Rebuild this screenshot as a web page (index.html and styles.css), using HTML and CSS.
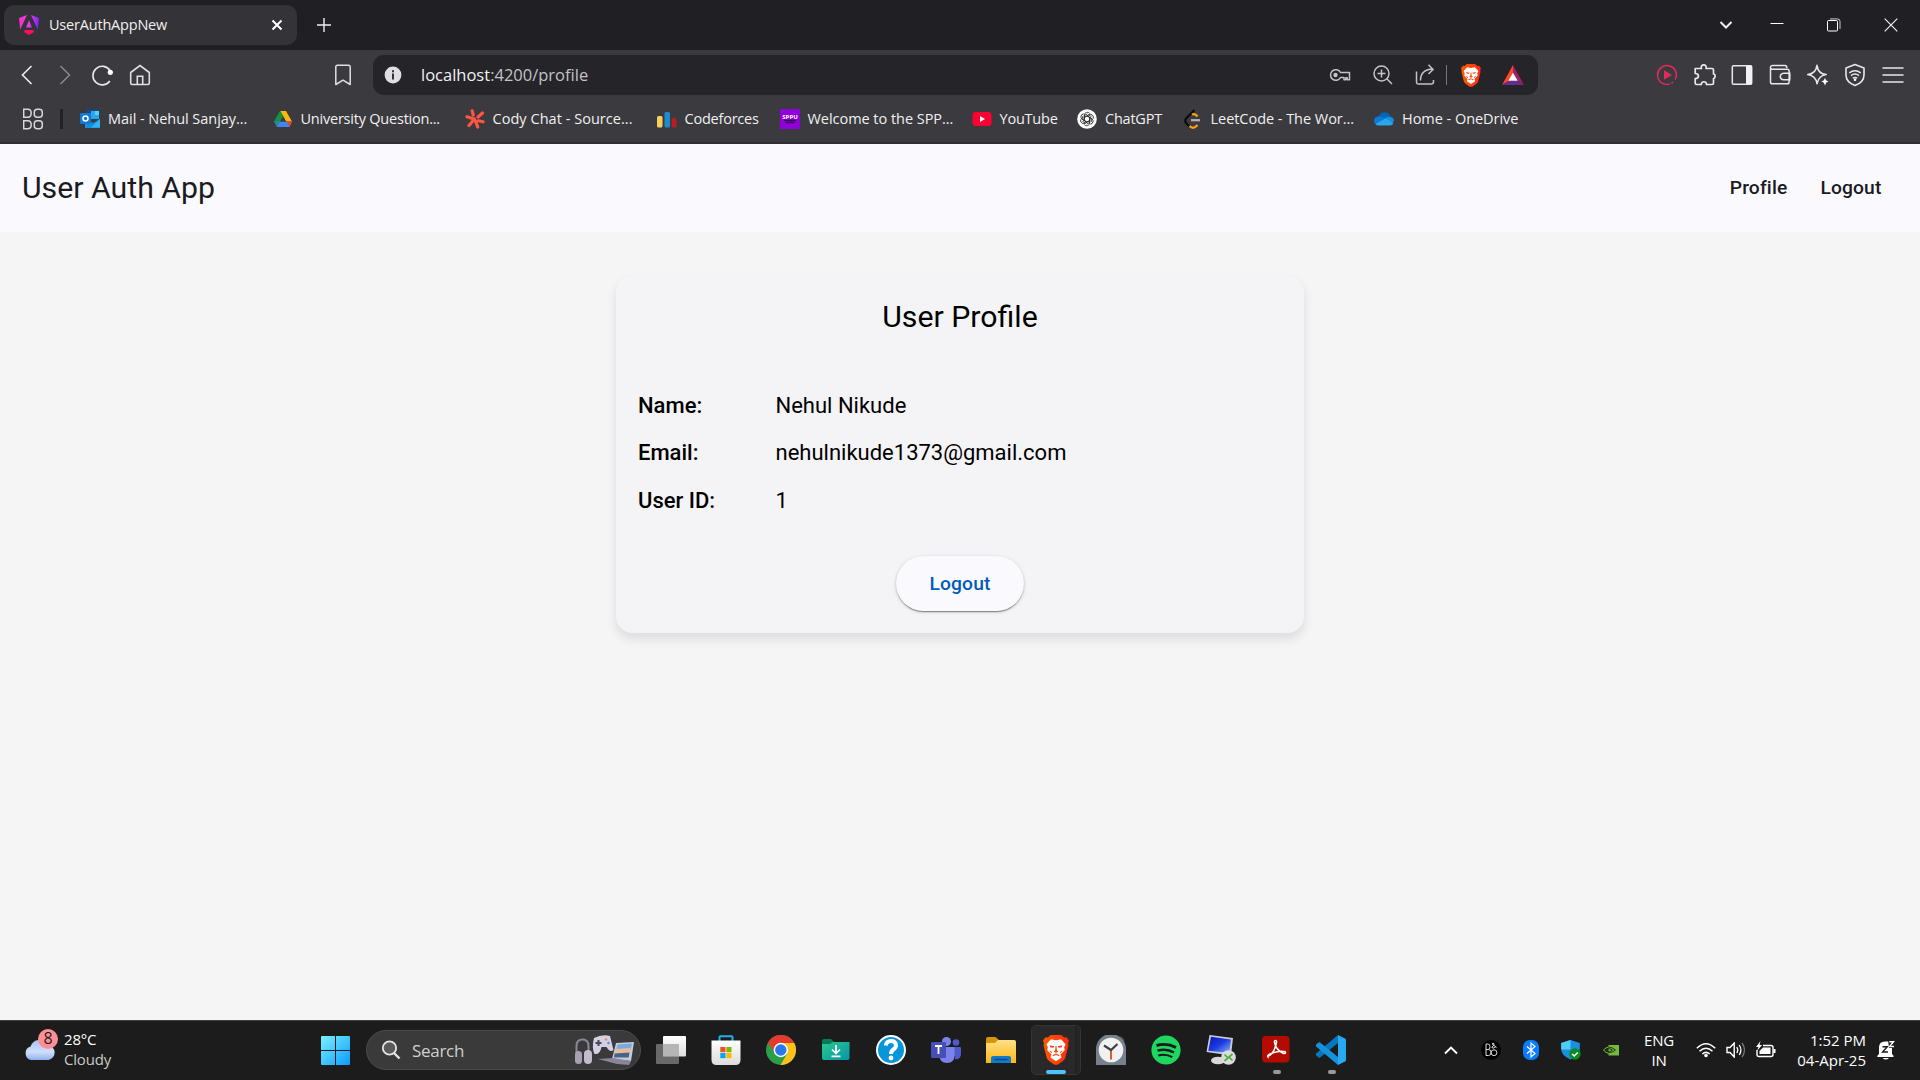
FILE: index.html
```html
<!DOCTYPE html>
<html lang="en">
<head>
<meta charset="utf-8">
<title>UserAuthAppNew</title>
<link rel="stylesheet" href="styles.css">
</head>
<body>
<svg class="defs" width="0" height="0" aria-hidden="true">
  <defs>
    <linearGradient id="braveFill" x1="0" x2="1"><stop offset="0" stop-color="#ff5a00"/><stop offset="1" stop-color="#ff2a10"/></linearGradient>
    <linearGradient id="ngFill" x1="0" x2="1" y1=".5" y2=".6"><stop offset="0" stop-color="#ff2dc4"/><stop offset=".5" stop-color="#e93cf0"/><stop offset="1" stop-color="#7a21ff"/></linearGradient>
    <linearGradient id="winFill" x1="0" y1="0" x2="1" y2="1"><stop offset="0" stop-color="#7df0ff"/><stop offset="1" stop-color="#0a9bff"/></linearGradient>
    <linearGradient id="cloudFill" x1="0" y1="0" x2="0" y2="1"><stop offset="0" stop-color="#a8c3f5"/><stop offset=".6" stop-color="#cfdffa"/><stop offset="1" stop-color="#8fb0ee"/></linearGradient>
    <linearGradient id="folderFill" x1="0" y1="0" x2="0" y2="1"><stop offset="0" stop-color="#ffe08a"/><stop offset="1" stop-color="#fbb80f"/></linearGradient>
    <linearGradient id="greenFill" x1="0" y1="0" x2="1" y2="1"><stop offset="0" stop-color="#2bc98a"/><stop offset="1" stop-color="#0496a8"/></linearGradient>
    <linearGradient id="screenFill" x1="0" y1="0" x2="1" y2="1"><stop offset="0" stop-color="#0818b8"/><stop offset=".5" stop-color="#1c3be0"/><stop offset="1" stop-color="#8db9f4"/></linearGradient>
    <linearGradient id="greyFill" x1="0" y1="0" x2="0" y2="1"><stop offset="0" stop-color="#ffffff"/><stop offset="1" stop-color="#dcdcdc"/></linearGradient>
    <symbol id="brave" viewBox="0 0 26 30">
      <path fill="url(#braveFill)" d="M7.500 0h11l2.600 2.600 2.400-.4L26 5.600l-1 3 .5 1.600-3.400 13.200-2.400 2.800-5.200 3.600h-3L6.300 26.200 3.900 23.400.5 10.200l.5-1.600-1-3 2.500-3.400 2.400.4z"/>
      <path fill="#fff" d="M8 4.200 13 5.200l5-1 4.600 5-1.500 3.200.7 2.500-4.200 4.600.9 3L13 26.200l-5.500-3.700.9-3-4.200-4.600.7-2.500-1.500-3.200z"/>
      <path fill="#ff4510" d="m6.500 10.300 4.800 1-1 1.500-2.800-.4zM19.500 10.300l-4.800 1 1 1.500 2.800-.4zM12.500 11h1l.3 4 1.400 1.500-2.200 1.500-2.200-1.500 1.400-1.500zM9.300 20.300l3.700-1.800 3.700 1.800-1 .8-2.700-1.200-2.700 1.200zM6 15l3 2-.5 1.500zM20 15l-3 2 .5 1.500z"/>
    </symbol>
  </defs>
</svg>

<header class="browser">
  <div class="tabstrip">
    <div class="tab">
      <svg class="fav" viewBox="0 0 20 20" width="20" height="20"><path fill="url(#ngFill)" d="M8 0 0 3l1.200 11.500zM12 0l8 3-1.200 11.500zM10 5.300l3 7.200H7z"/><path fill="#ff0f4d" d="M5.800 15h8.400l1 2-5.200 3-5.200-3z"/></svg>
      <span class="tab-title">UserAuthAppNew</span>
      <svg viewBox="0 0 12 12" width="12" height="12"><path d="M1.500 1.500l9 9m0-9-9 9" stroke="#fff" stroke-width="2"/></svg>
    </div>
    <svg class="newtab" viewBox="0 0 14 14" width="14" height="14"><path d="M7 0v14M0 7h14" stroke="#eee" stroke-width="1.400"/></svg>
    <div class="winctl">
      <svg viewBox="0 0 14 14" width="14" height="14"><path d="m1.500 4 5.500 5.500L12.500 4" fill="none" stroke="#eee" stroke-width="2"/></svg>
      <svg viewBox="0 0 14 14" width="14" height="14"><path d="M.5 5.500h13" stroke="#fff"/></svg>
      <svg viewBox="0 0 14 14" width="14" height="14"><path d="M3 .9h7.500a2.500 2.500 0 0 1 2.500 2.500V11" fill="none" stroke="#ccc"/><rect x=".5" y="2.500" width="10" height="10.500" rx="1" fill="none" stroke="#fff"/></svg>
      <svg viewBox="0 0 14 14" width="14" height="14"><path d="m.7.7 12.600 12.600m0-12.600L.7 13.300" stroke="#eee" stroke-width="1.200"/></svg>
    </div>
  </div>

  <div class="navbar">
    <div class="navbtns">
      <svg viewBox="0 0 22 22" width="22" height="22"><path d="M15.500 2 6.500 11l9 9" fill="none" stroke="#e8e8ea" stroke-width="1.700"/></svg>
      <svg viewBox="0 0 22 22" width="22" height="22"><path d="M6.500 2l9 9-9 9" fill="none" stroke="#8a898e" stroke-width="1.500"/></svg>
      <svg class="reload" viewBox="0 0 22 22" width="22" height="22"><path d="M18.800 17A9.300 9.300 0 1 1 19 6.500" fill="none" stroke="#e8e8ea" stroke-width="1.600"/><circle cx="19.300" cy="8.300" r="2.600" fill="#fff"/></svg>
      <svg viewBox="0 0 22 22" width="22" height="22"><path d="M1.700 8.500 11 1.500l9.300 7V19q0 1.500-1.500 1.500H3.200Q1.700 20.500 1.700 19zM8.300 20.500v-8.300h5.400v8.300" fill="none" stroke="#e0e0e3" stroke-width="1.600"/></svg>
    </div>
    <svg class="mark" viewBox="0 0 18 22" width="18" height="22"><path d="M1.800 20.500V3q0-1.700 1.700-1.700h11q1.700 0 1.700 1.700v17.500L9 16.200z" fill="none" stroke="#e0e0e3" stroke-width="1.500" stroke-linejoin="round"/></svg>
    <div class="urlbar">
      <svg class="info" viewBox="0 0 18 18" width="18" height="18"><circle cx="9" cy="9" r="8.400" fill="#dfdfe2"/><path d="M8 4.200h2v2H8zM8 7.500h2v6H8z" fill="#333238"/></svg>
      <span class="url">localhost<span class="urlpath">:4200/profile</span></span>
      <div class="urlicons">
        <svg class="key" viewBox="0 0 22 16" width="22" height="16"><path d="M11.500 5.500A5.300 5.300 0 1 0 11.500 10.500H15v2.300h1.800v-2h1.400v2H20.500V5.500z" fill="none" stroke="#c4c4c8" stroke-width="1.500" stroke-linejoin="round"/><circle cx="6.500" cy="8" r="2.200" fill="#c4c4c8"/></svg>
        <svg class="lens" viewBox="0 0 22 22" width="22" height="22"><path d="M14.800 14.800 20 20M9.500 5.500v8M5.500 9.500h8" stroke="#c4c4c8" stroke-width="1.500"/><circle cx="9.500" cy="9.500" r="7.500" fill="none" stroke="#c4c4c8" stroke-width="1.500"/></svg>
        <svg class="share" viewBox="0 0 22 22" width="22" height="22"><path d="M2.500 7.500v10.800q0 1.700 1.700 1.700h13q2.300 0 2.300-2.300V16M6.500 16.500c0-7 3-11 12-11.500M14.500.8l4.500 4.600-4.500 4.600" fill="none" stroke="#c4c4c8" stroke-width="1.500"/></svg>
        <i class="urlsep"></i>
        <svg class="lion" width="20" height="23"><use href="#brave"/></svg>
        <svg class="bat" viewBox="0 0 22 20" width="22" height="20"><path fill="#ff4724" d="M11 0 0 20l7-4.200L11 9z"/><path fill="#9e1f63" d="m11 0 11 20-7-4.200L11 9z"/><path fill="#662d91" d="M0 20h22l-7-4.200H7z"/><path fill="#fff" d="m11 7.800 4.700 8H6.300z"/></svg>
      </div>
    </div>
    <div class="tools">
      <svg viewBox="0 0 22 22" width="22" height="22"><path d="M19.200 15.500A9.400 9.400 0 1 0 14 19.900M15.300 19.300l1.800-1.200" fill="none" stroke="#e6285c" stroke-width="1.500"/><path d="m8 6.200 8 4.800-8 4.800z" fill="#e6285c"/></svg>
      <svg viewBox="0 0 22 22" width="22" height="22"><path d="M1.200 4.500H7.500C6.500 2.500 8 .9 9.700.9s3.200 1.600 2.300 3.600h6q1.500 0 1.500 1.500v4c2-.3 2.200 4.300 0 4.500V19q0 1.500-1.500 1.500H12.500C12.500 16.800 7.300 16.800 7.300 20.500H2.700q-1.500 0-1.500-1.500V14.500C5.500 14.500 5.500 9.500 1.200 9.500z" fill="none" stroke="#e8e8ea" stroke-width="1.700" stroke-linejoin="round"/></svg>
      <svg viewBox="0 0 22 22" width="22" height="22"><rect x="1.300" y="1.800" width="19.400" height="18.400" rx="1.300" fill="none" stroke="#e8e8ea" stroke-width="1.500"/><path d="M15 1.800h6v18.400h-6z" fill="#f2f2f4"/></svg>
      <svg viewBox="0 0 22 22" width="22" height="22"><path d="M1.500 5V18q0 1.800 1.800 1.800h15q1.800 0 1.800-1.800V7q0-1.800-1.800-1.800H2.500Q1 4 1.500 2.800q.5-1.300 2-1.300H16q1.800 0 1.800 2.500M20.800 9.200h-6q-3.500.3-3.500 3.300t3.500 3.300h6z" fill="none" stroke="#e8e8ea" stroke-width="1.500"/></svg>
      <svg viewBox="0 0 22 22" width="22" height="22"><path d="M10 1.300q1 8.500 9.200 9.200-3.500.5-5.700 2.500-2.500 2-3.500 6.700Q9 12 .8 10.500 9 9.500 10 1.300z" fill="none" stroke="#e8e8ea" stroke-width="1.600" stroke-linejoin="round"/><path d="M18 13.500q.5 3.500 3.700 4-3.200.6-3.700 4.300-.6-3.700-3.800-4.300 3.200-.5 3.800-4z" fill="#fff"/></svg>
      <svg viewBox="0 0 22 24" width="22" height="24"><path d="m11 1.600 9 3.300v7q0 7-9 10.700Q2 19 2 12V4.900z" fill="none" stroke="#e8e8ea" stroke-width="1.600" stroke-linejoin="round"/><path d="M5.300 9.800q5.700-4.300 11.400 0M7 12.600q4-3 8 0M8.800 15.200q2.200-1.600 4.400 0" fill="none" stroke="#e8e8ea" stroke-width="1.500"/><circle cx="11" cy="16.700" r="1.300" fill="#fff"/></svg>
      <svg viewBox="0 0 22 22" width="22" height="22"><path d="M.5 4h21M.5 11h21M.5 18h21" stroke="#e8e8ea" stroke-width="1.700"/></svg>
    </div>
  </div>

  <nav class="bookmarks">
    <svg class="apps" viewBox="0 0 20 22" width="20" height="22"><g fill="none" stroke="#d8d8da" stroke-width="1.500"><path d="M.7 1.300h4q3.500 0 3.500 4t-3.500 4h-4zM.7 12.800h4q3.500 0 3.500 4t-3.500 4h-4z"/><rect x="11.300" y="1.300" width="8" height="8" rx="3"/><rect x="11.300" y="12.800" width="8" height="8" rx="3"/></g></svg>
    <i class="bmsep"></i>
    <a class="bm w193 loose"><svg viewBox="0 0 20 20" width="20" height="20"><path fill="#0a4f9c" d="M7 1h12v9H7z"/><path fill="#28a8ea" d="M11 2h8v8h-8z"/><path fill="#50d0ff" d="M15 2h4v4h-4z"/><path fill="#1490df" d="m5 9 8 5 7-4v9H5z"/><path fill="#32b4f0" d="m20 10-9 8.500h9z"/><rect y="4" width="11" height="11" rx="1" fill="#0f78d4"/><circle cx="5.500" cy="9.500" r="2.500" fill="none" stroke="#fff" stroke-width="1.500"/></svg><span>Mail - Nehul Sanjay...</span></a>
    <a class="bm w192"><svg viewBox="0 0 20 20" width="20" height="20"><path fill="#12a150" d="M7 2h6L5 17 1 12.500z"/><path fill="#fcb900" d="M7.500 2h5.500l6 10.500h-6z"/><path fill="#4285f4" d="M1 12.500h18L16.500 18H4z"/><path fill="#ea4335" d="M13.500 12.500H19L16.500 18z"/><path fill="#188038" d="m7.500 2 2.700 4.700L4 18l-3-5.500z" opacity=".45"/><path fill="#3c3b3f" d="m10 7.500 3 5H7z"/></svg><span>University Question...</span></a>
    <a class="bm w192 looser"><svg viewBox="0 0 20 20" width="20" height="20"><path d="m7.200 1.800 1 4.200M17.500 4 13 8M2 7.800l7 2.200M13.500 11.800l4.500 1M9.500 10 4 16.500M10.500 12l2.200 6" stroke="#ff5543" stroke-width="3.200" stroke-linecap="round"/></svg><span>Cody Chat - Source...</span></a>
    <a class="bm w123"><svg viewBox="0 0 20 20" width="20" height="20"><rect x="0" y="7" width="5.500" height="11.500" rx="1.500" fill="#f8cf5c"/><rect x="7.500" y="3" width="5.500" height="15.500" rx="1.500" fill="#1c8ccc"/><rect x="14.700" y="9" width="4.800" height="9.500" rx="1.500" fill="#b51e26"/></svg><span>Codeforces</span></a>
    <a class="bm w192 loose"><svg viewBox="0 0 20 20" width="20" height="20"><path fill="#9000d8" d="M0 0h20v20H0z"/><text x="10" y="9.500" text-anchor="middle" class="sppu">SPPU</text><path d="M4 11.500h12M5.500 13.500h9" stroke="#3b0560" stroke-width="1.500"/></svg><span>Welcome to the SPP...</span></a>
    <a class="bm w106"><svg viewBox="0 0 20 20" width="20" height="20"><rect x=".5" y="3" width="19" height="14" rx="3" fill="#ff0033"/><path fill="#fff" d="m8 7 5 3-5 3z"/></svg><span>YouTube</span></a>
    <a class="bm w106"><svg viewBox="0 0 20 20" width="20" height="20"><circle cx="10" cy="10" r="9.800" fill="#fff"/><g fill="none" stroke="#222" stroke-width=".8"><path id="petal" d="M7.300 11.500V6.200a3 3 0 0 1 5.500-1.600M7.300 8.400l4.300-2.400 3 1.700"/><use href="#petal" transform="rotate(60 10 10)"/><use href="#petal" transform="rotate(120 10 10)"/><use href="#petal" transform="rotate(180 10 10)"/><use href="#petal" transform="rotate(240 10 10)"/><use href="#petal" transform="rotate(300 10 10)"/></g></svg><span>ChatGPT</span></a>
    <a class="bm w191 loose"><svg viewBox="0 0 20 20" width="20" height="20"><path d="m11.500 1-8 8q-2.500 3 0 5.500l3 3" fill="none" stroke="#0c0c0c" stroke-width="2.200"/><path d="M6.500 17q3.500 3.500 7 0l1-1M9 5.500q3-1.500 5.500 2" fill="none" stroke="#ffa116" stroke-width="2.200"/><path d="M8 11.200h9" stroke="#b3b3b3" stroke-width="2.200"/></svg><span>LeetCode - The Wor...</span></a>
    <a class="bm loose"><svg viewBox="0 0 20 20" width="20" height="20"><path fill="#0364b8" d="M4 8q3-6 8.500-4.500Q16 4.500 16.500 8L10 13z"/><path fill="#0f78d4" d="M4.500 7.500q3-.5 5 1L15 16H4.500Q0 15.500 0 11.800 0 8 4.500 7.500z"/><path fill="#1490df" d="M10 10q3-3 6-2.200 4 .7 4 4.500l-5 3z"/><path fill="#28a8ea" d="m1.500 15 10-5.500L19.500 14q-1 2.500-4 2.500H5q-2.500 0-3.500-1.500z"/></svg><span>Home - OneDrive</span></a>
  </nav>
</header>

<main class="app">
  <div class="toolbar">
    <span class="brand">User Auth App</span>
    <nav class="menu"><a>Profile</a><a>Logout</a></nav>
  </div>
  <section class="card">
    <h1>User Profile</h1>
    <dl>
      <div><dt>Name:</dt><dd>Nehul Nikude</dd></div>
      <div><dt>Email:</dt><dd>nehulnikude1373@gmail.com</dd></div>
      <div><dt>User ID:</dt><dd>1</dd></div>
    </dl>
    <button class="logout">Logout</button>
  </section>
</main>

<footer class="taskbar">
  <div class="weather">
    <svg viewBox="0 0 38 38" width="38" height="38"><path d="M8 33a7 7 0 0 1-.5-13.500 9.500 9.500 0 0 1 17.500-1.500A7.600 7.600 0 0 1 25.500 33z" transform="translate(-1 0)" fill="url(#cloudFill)"/><circle cx="24" cy="12" r="10" fill="#ff8f96"/><text x="24" y="17" text-anchor="middle" class="badge">8</text></svg>
    <div class="wtext"><span>28°C</span><span class="dim">Cloudy</span></div>
  </div>
  <svg class="start" viewBox="0 0 29 29" width="29" height="29"><path fill="url(#winFill)" d="M1 0h13v14H0V1q0-1 1-1zM15 0h13q1 0 1 1v13H15zM0 15h14v14H1q-1 0-1-1zM15 15h14v13q0 1-1 1H15z"/></svg>
  <div class="search">
    <svg viewBox="0 0 20 20" width="20" height="20"><circle cx="8.500" cy="8" r="6.700" fill="#5a5a5a" stroke="#e4e4e4" stroke-width="1.800"/><path d="m13 13 5.500 5.500" stroke="#e4e4e4" stroke-width="2.400"/></svg>
    <span>Search</span>
    <svg class="gear" viewBox="0 0 60 32" width="60" height="32"><path d="M2.500 19V12q0-6.500 6-6.500t6 6.500v7" fill="none" stroke="#8c8798" stroke-width="2"/><rect x="1" y="17" width="7" height="13" rx="3.500" fill="#a7a0b3"/><rect x="10" y="16" width="8" height="14" rx="4" fill="#c2bccd"/><path d="M20 4q8-4 16-2 2 8 3.500 14-3.500 3-7-3h-5q-1.500 8-7 7-3-6-.5-16z" fill="#d6cfe4"/><path d="M24.500 6v6M21.500 9h6" stroke="#4b4558" stroke-width="2"/><circle cx="32" cy="5.500" r="1.300" fill="#e0955c"/><circle cx="34.500" cy="9" r="1.300" fill="#5a8bd8"/><path d="m42 9 18-1-3 19-19-2z" fill="#c3cddc"/><path d="m43.500 10.500 14.500-1-1.200 6H42.300z" fill="#78aadf"/><path d="m42 15 14.500-1-1 5.500H40.500z" fill="#e8bd9a"/><path d="m40.500 19.500 15-1-.8 5H40z" fill="#466486"/><path d="m24 25 15-1 18 3-2 4-12-1z" fill="#8b859a"/></svg>
  </div>
  <div class="apps-row">
    <div class="slot"><svg viewBox="0 0 30 30" width="30" height="30"><rect x="7" y="1" width="23" height="20.500" rx="1" fill="url(#greyFill)"/><rect y="9" width="23" height="20" rx="1" fill="#777" fill-opacity=".85"/><path d="M7 9h16v12.500H7z" fill="#b5b5b5"/></svg></div>
    <div class="slot"><svg viewBox="0 0 30 30" width="30" height="30"><path d="M8.500 6V2q0-.8.800-.8h11.400q.8 0 .8.800v4" fill="none" stroke="#23b0ea" stroke-width="2"/><path d="M.5 5.500h29V25q0 5-5 5h-19q-5 0-5-5z" fill="url(#greyFill)"/><path fill="#f25022" d="M9.300 12h5.200v5.200H9.300z"/><path fill="#7fba00" d="M15.300 12h5.200v5.200h-5.200z"/><path fill="#00a4ef" d="M9.300 18h5.200v5.200H9.300z"/><path fill="#ffb900" d="M15.300 18h5.200v5.200h-5.200z"/></svg></div>
    <div class="slot"><svg viewBox="0 0 30 30" width="30" height="30"><circle cx="15" cy="15" r="15" fill="#2a9e48"/><path fill="#fcc21b" d="M15 8h13.300A15 15 0 0 1 14.500 30l7-12z"/><path fill="#e33b2e" d="M2 7.500a15 15 0 0 1 26 0V8H15l-6 10z"/><circle cx="14.800" cy="15" r="7.200" fill="#fff"/><circle cx="14.800" cy="15" r="5.700" fill="#2a78ee"/></svg></div>
    <div class="slot"><svg viewBox="0 0 30 30" width="30" height="30"><path d="M1 6q0-2 2-2h7l3 3v5H1z" fill="#087a5c"/><path d="M1 9h8l3-2h16.500V23q0 2-2 2H3q-2 0-2-2z" fill="url(#greenFill)"/><path d="M15 10v8m-4-3.500 4 4 4-4M10.500 21.300h9" fill="none" stroke="#fff" stroke-width="1.700"/></svg></div>
    <div class="slot"><svg viewBox="0 0 30 30" width="30" height="30"><circle cx="15" cy="15" r="14" fill="#0796dc" stroke="#fff" stroke-width="2"/><path d="M9.800 10.500Q10.500 6 15 6t5 4.200q0 2.600-2.700 4.300-2.300 1.600-2.300 4.500" fill="none" stroke="#fff" stroke-width="4"/><circle cx="15" cy="23" r="2.400" fill="#fff"/></svg></div>
    <div class="slot"><svg viewBox="0 0 30 30" width="30" height="30"><circle cx="15.500" cy="6.500" r="4.500" fill="#7b83eb"/><circle cx="25" cy="7.500" r="3.300" fill="#5059c9"/><path d="M20 12h9q1 0 1 1v6q0 5-5.500 5.500z" fill="#5059c9"/><path d="M9 12h13.500q1 0 1 1v7q0 8-7.500 8t-7.500-8z" fill="#7b83eb"/><rect y="7" width="15" height="16" rx="1.300" fill="#464eb8"/><path d="M4 11h7M7.500 11v8" stroke="#fff" stroke-width="1.800"/></svg></div>
    <div class="slot"><svg viewBox="0 0 30 30" width="30" height="30"><path d="M0 4q0-2 2-2h7.500L13 5v6H0z" fill="#d89607"/><path d="M0 8h9l3-3h16q2 0 2 2v21H0z" fill="url(#folderFill)"/><path d="M5 28v-5q0-2 2-2h16q2 0 2 2v5z" fill="#1178cc"/><path d="M8.500 24.500h13" stroke="#0a4b8c" stroke-width="1.500"/></svg></div>
    <div class="slot active"><svg width="26" height="30"><use href="#brave"/></svg><i class="pill on"></i></div>
    <div class="slot"><svg viewBox="0 0 30 30" width="30" height="30"><path d="m22 4 3-3 4 4-3 3z" fill="#454545"/><path d="M0 14a14.700 14.700 0 0 1 30 0v16H0z" fill="#75828d"/><circle cx="15" cy="15" r="12.300" fill="#f1f1f1"/><path d="M8 10.500 15 15l6.500-6" fill="none" stroke="#3c4248" stroke-width="2.200"/><path d="M15 16v8.500" stroke="#dc4a1c" stroke-width="1.800"/></svg></div>
    <div class="slot"><svg viewBox="0 0 30 30" width="30" height="30"><circle cx="15" cy="15" r="14.600" fill="#1ed760"/><path d="M5.500 10.500q10.500-3 19.500 2" fill="none" stroke="#191919" stroke-width="2.900"/><path d="M6.500 15.700q9-2.500 16.500 1.800" fill="none" stroke="#191919" stroke-width="2.400"/><path d="M7.300 20.500q7.500-2 14 1.700" fill="none" stroke="#191919" stroke-width="2"/></svg></div>
    <div class="slot"><svg viewBox="0 0 30 30" width="30" height="30"><ellipse cx="12" cy="25.500" rx="7" ry="3.800" fill="#d8d8d8"/><path d="m3.500 0 23.500 3-2 17.500L.5 17z" fill="#c8ccd2"/><path d="M5 1.800 25 4.400 23.300 18 2.300 15.800z" fill="url(#screenFill)"/><circle cx="22.500" cy="22.500" r="7.300" fill="#dcdcdc"/><path d="m18.500 19.500 3.500 3.500-3.500 3M26.500 19l-3.500 3 3.500 3.500" fill="none" stroke="#4cae46" stroke-width="1.700"/></svg></div>
    <div class="slot"><svg viewBox="0 0 30 30" width="30" height="30"><rect x="1" y="1" width="27.500" height="26.500" rx="4" fill="#b30b00"/><path d="M7 21q6-1.500 8.500-13.500.3-2-1-2t-1 2q1.500 7.500 9 11 2 .3 2-1t-3-1.300q-7-.2-13.500 3.300Q6 21 7 22z" fill="none" stroke="#fff" stroke-width="1.500"/></svg><i class="pill"></i></div>
    <div class="slot"><svg viewBox="0 0 30 30" width="30" height="30"><path d="m22 0 7 3.500q1 .6 1 1.500v20q0 1-1 1.500L22 30z" fill="#29a8f2"/><path d="M22 0v8L3.500 23 0 20.500v-2z" fill="#0878bd"/><path d="M22 30v-8L3.500 7 0 9.500v2z" fill="#1592dc"/></svg><i class="pill"></i></div>
  </div>
  <div class="tray">
    <div class="ti"><svg viewBox="0 0 14 10" width="14" height="10"><path d="m1 8.500 6-6 6 6" fill="none" stroke="#fff" stroke-width="1.900"/></svg></div>
    <div class="ti"><svg viewBox="0 0 20 20" width="20" height="20"><circle cx="10" cy="10" r="10" fill="#000"/><path d="M5 4v11.500h2.500q2.500 0 2.500-3t-2.500-3H5m0-5.500h2q2 0 2 2.800T7 9.500" fill="none" stroke="#ddd" stroke-width="1"/><circle cx="13" cy="12.700" r="2.900" fill="none" stroke="#ddd"/><path d="M15.500 7.500 11 3.800q2.500-1.300 2 1L10.800 7.500q2 2 4.400-1.300" fill="none" stroke="#ddd"/></svg></div>
    <div class="ti"><svg viewBox="0 0 16 20" width="16" height="20"><rect width="16" height="20" rx="7" fill="#0a7cff"/><path d="m4 6.500 8 7L8 17V3l4 3.500-8 7" fill="none" stroke="#fff" stroke-width="1.200"/></svg></div>
    <div class="ti"><svg viewBox="0 0 20 20" width="20" height="20"><path d="m9.500 0 9.300 3v6q0 6.500-9.300 10.500Q.2 15.500.2 9V3z" fill="#1b8fe0"/><path d="M9.500 0v9.500H.2V3z" fill="#4ecdf5"/><circle cx="14" cy="14" r="5.700" fill="#0c8a20"/><path d="m11.200 14 2 2 3.500-3.600" fill="none" stroke="#fff" stroke-width="1.500"/></svg></div>
    <div class="ti"><svg viewBox="0 0 16 12" width="16" height="12"><path d="M5.500 1H16v10.500H5.500z" fill="#76b83f"/><path d="M.5 6Q6 .5 12.500 6 7 11 .5 6zM3 6q3-3 6.500 0Q6 9.500 3 6z" fill="none" stroke="#1f3d10"/><path d="M.5 6Q3 3.300 5.500 3M.5 6q2 2.800 5 3.300" fill="none" stroke="#76b83f"/></svg></div>
    <div class="lang"><span>ENG</span><span>IN</span></div>
    <div class="sys">
      <svg viewBox="0 0 20 16" width="20" height="16"><g fill="none" stroke="#fff" stroke-width="1.500"><path d="M.8 6.300q9.200-9 18.400 0M3.500 9.300q6.500-6 13 0M6.300 12q3.700-3.300 7.400 0"/></g><circle cx="10" cy="13.500" r="1.800" fill="#fff"/></svg>
      <svg viewBox="0 0 20 16" width="20" height="16"><path d="M1 5.500v5h3L8.200 15V1L4 5.500z" fill="none" stroke="#fff" stroke-width="1.400"/><path d="M10.800 5q2 3 0 6M13.200 3q3.500 5 0 10" fill="none" stroke="#fff" stroke-width="1.300"/><path d="M16 1q5 7 0 14" fill="none" stroke="#777" stroke-width="1.300"/></svg>
      <svg viewBox="0 0 20 18" width="20" height="18"><path d="M7 4.500h8q2 0 2 2v7q0 2-2 2H3q-2 0-2-2V9" fill="none" stroke="#fff" stroke-width="1.400"/><path d="M7 6.500h7.500v6.500h-11V10z" fill="#fff"/><path d="M17.500 8h2v4h-2zM4.500 0 0 6h2.500L1 10l5-6H3.500z" fill="#fff"/></svg>
    </div>
    <div class="clock"><span>1:52 PM</span><span>04-Apr-25</span></div>
    <svg class="bell" viewBox="0 0 18 20" width="18" height="20"><path d="M2 14V7.500Q2 1.500 8 1.500h4V7h3v7l1.500 1.800V17H.3v-1.200zM5.500 18h6.500q-3.200 3-6.500 0z" fill="#fff"/><path d="M5.500 6.700h4.800l-4.800 5.300h5.500" fill="none" stroke="#1c1c1c" stroke-width="1.400"/><path d="M11 0h7v8h-6z" fill="#1c1c1c"/><path d="M12.300 1.700H16.500l-4 4.800H17" fill="none" stroke="#fff" stroke-width="1.400"/></svg>
  </div>
</footer>
</body>
</html>
```
FILE: styles.css
```css
* { box-sizing: border-box; }
body {
  margin: 0;
  width: 1920px;
  height: 1080px;
  overflow: hidden;
  display: flex;
  flex-direction: column;
  background: #f5f5f5;
  font-family: "Open Sans", "Noto Sans", sans-serif;
}
svg { display: block; flex: none; }
.defs { position: absolute; }

/* browser chrome */
.browser {
  height: 144px;
  background: #3b3a3e;
  border-bottom: 2px solid #2f2e33;
  color: #f0f0f1;
}
.tabstrip {
  height: 50px;
  background: #201f24;
  display: flex;
  align-items: center;
  padding-left: 4px;
}
.tab {
  width: 293px;
  height: 40px;
  border-radius: 10px;
  background: #343337;
  display: flex;
  align-items: center;
  padding: 0 14px 0 15px;
}
.tab-title { margin-left: 10px; padding-bottom: 2px; flex: 1; font-size: 14.500px; letter-spacing: -0.2px; white-space: nowrap; }
.newtab { margin-left: 20px; }
.winctl { margin-left: auto; display: flex; padding-right: 22px; }
.winctl svg { margin-left: 43px; }
.winctl svg:nth-child(2) { margin-left: 37px; }
.winctl svg:nth-child(3) { margin-left: 43px; }
.winctl svg:nth-child(4) { margin-left: 43px; }

.navbar { height: 50px; display: flex; align-items: center; }
.navbtns { display: flex; gap: 16px; padding-left: 16px; }
.reload { margin-left: -1px; }
.mark { margin-left: 183px; }
.urlbar {
  width: 1165px;
  height: 40px;
  margin-left: 21px;
  border-radius: 11px;
  background: #252429;
  display: flex;
  align-items: center;
  padding-left: 11px;
}
.url { margin-left: 19px; padding-bottom: 2px; font-size: 16.500px; letter-spacing: 0; white-space: nowrap; }
.urlpath { color: #c3c2c6; }
.urlicons { margin-left: auto; display: flex; align-items: center; padding-right: 14px; }
.lens { margin-left: 21px; }
.share { margin-left: 20px; }
.urlsep { width: 1px; height: 20px; margin-left: 10px; background: #77767a; }
.lion { margin-left: 14px; }
.bat { margin-left: 21px; }
.tools { flex: 1; display: flex; align-items: center; justify-content: space-between; padding: 0 16px 0 118px; }

.bookmarks { height: 38px; display: flex; align-items: center; padding-left: 23px; }
.bmsep { width: 3px; height: 20px; margin: 0 17px; background: #222126; }
.bm {
  display: flex;
  align-items: center;
  gap: 8px;
  font-size: 14.500px;
  letter-spacing: -0.22px;
  white-space: nowrap;
}
.bm span { padding-bottom: 2px; }
.bm.loose { letter-spacing: -0.04px; }
.bm.looser { letter-spacing: 0.04px; }
.w193 { width: 192.500px; }
.w192 { width: 192px; }
.w191 { width: 191.500px; }
.w123 { width: 123px; }
.w106 { width: 105.500px; }
.sppu { font: 700 6px "Open Sans", sans-serif; fill: #fff; letter-spacing: 0; }

/* application */
.app {
  flex: 1;
  display: flex;
  flex-direction: column;
  align-items: center;
  font-family: Roboto, sans-serif;
}
.toolbar {
  width: 100%;
  height: 88px;
  padding: 0 22px 2px;
  display: flex;
  align-items: center;
  justify-content: space-between;
  background: #faf9fd;
  color: #1a1b1f;
}
.brand { font-size: 30.250px; }
.menu { display: flex; gap: 33px; padding-right: 16.500px; font-size: 19.250px; font-weight: 500; letter-spacing: 0.14px; }
.card {
  width: 688px;
  height: 357px;
  margin-top: 44px;
  padding: 22px;
  border-radius: 16.500px;
  background: #f4f3f6;
  box-shadow: 0 5.500px 11px rgba(0, 0, 0, .1);
  display: flex;
  flex-direction: column;
  align-items: center;
  color: #000;
}
.card h1 { margin: 0; font-size: 30.250px; line-height: 38px; font-weight: 400; }
.card dl { align-self: stretch; margin: 45.500px 0 0; font-size: 22px; }
.card dl div { display: flex; height: 47.500px; align-items: center; }
.card dt { width: 137.500px; font-weight: 500; }
.card dd { margin: 0; }
.logout {
  width: 128px;
  height: 55px;
  margin-top: auto;
  border: 0;
  border-radius: 28px;
  background: #faf9fd;
  color: #005cbb;
  font: 500 19.250px Roboto, sans-serif;
  letter-spacing: 0.14px;
  box-shadow: 0 2px 1px -1px rgba(0, 0, 0, .3), 0 1px 2px rgba(0, 0, 0, .2), 0 1px 4px rgba(0, 0, 0, .12);
}

/* taskbar */
.taskbar {
  height: 60px;
  display: flex;
  align-items: center;
  padding-bottom: 1px;
  background: #1c1c1c;
  border-top: 1px solid #3e4343;
  color: #fff;
  font-size: 15px;
}
.weather { width: 321px; display: flex; align-items: center; padding-left: 24px; }
.weather svg { margin-top: -8px; }
.badge { font: 16px "Open Sans", sans-serif; fill: #222; }
.wtext { margin-left: 2px; padding-bottom: 2px; display: flex; flex-direction: column; line-height: 20px; letter-spacing: -0.2px; }
.dim { color: #c8c8c8; }
.search {
  width: 275px;
  height: 40px;
  margin-left: 16px;
  padding: 0 6px 0 14px;
  border: 1px solid #4b4b4b;
  border-radius: 20px;
  background: #3a3a3a;
  display: flex;
  align-items: center;
  color: #cfcfcf;
  font-size: 17px;
  letter-spacing: -0.3px;
}
.search span { margin-left: 11px; }
.gear { margin-left: auto; }
.apps-row { display: flex; margin-left: 2.500px; }
.slot {
  position: relative;
  width: 55px;
  height: 50px;
  display: flex;
  align-items: center;
  justify-content: center;
}
.slot.active::before {
  content: "";
  position: absolute;
  inset: 0 3px 0 2px;
  border: 1px solid #343434;
  border-radius: 5px;
  background: linear-gradient(90deg, #292929 43px, #1f1f1f 43px, #252525 45px);
}
.slot.active svg { position: relative; }
.pill {
  position: absolute;
  bottom: 1px;
  left: 24px;
  width: 8px;
  height: 4px;
  border-radius: 2px;
  background: #9a9a9a;
}
.pill.on { left: 17px; width: 20px; background: #4cc2ff; }
.tray { margin-left: auto; display: flex; align-items: center; }
.ti { width: 40px; display: flex; justify-content: center; }
.lang { width: 56px; padding-bottom: 1px; display: flex; flex-direction: column; align-items: center; line-height: 20px; letter-spacing: -0.2px; }
.sys { display: flex; align-items: center; gap: 10px; padding-left: 9px; }
.clock { width: 90px; padding-bottom: 1px; display: flex; flex-direction: column; align-items: flex-end; line-height: 20px; letter-spacing: 0; white-space: nowrap; }
.bell { margin: 0 25px 0 11px; }
```
